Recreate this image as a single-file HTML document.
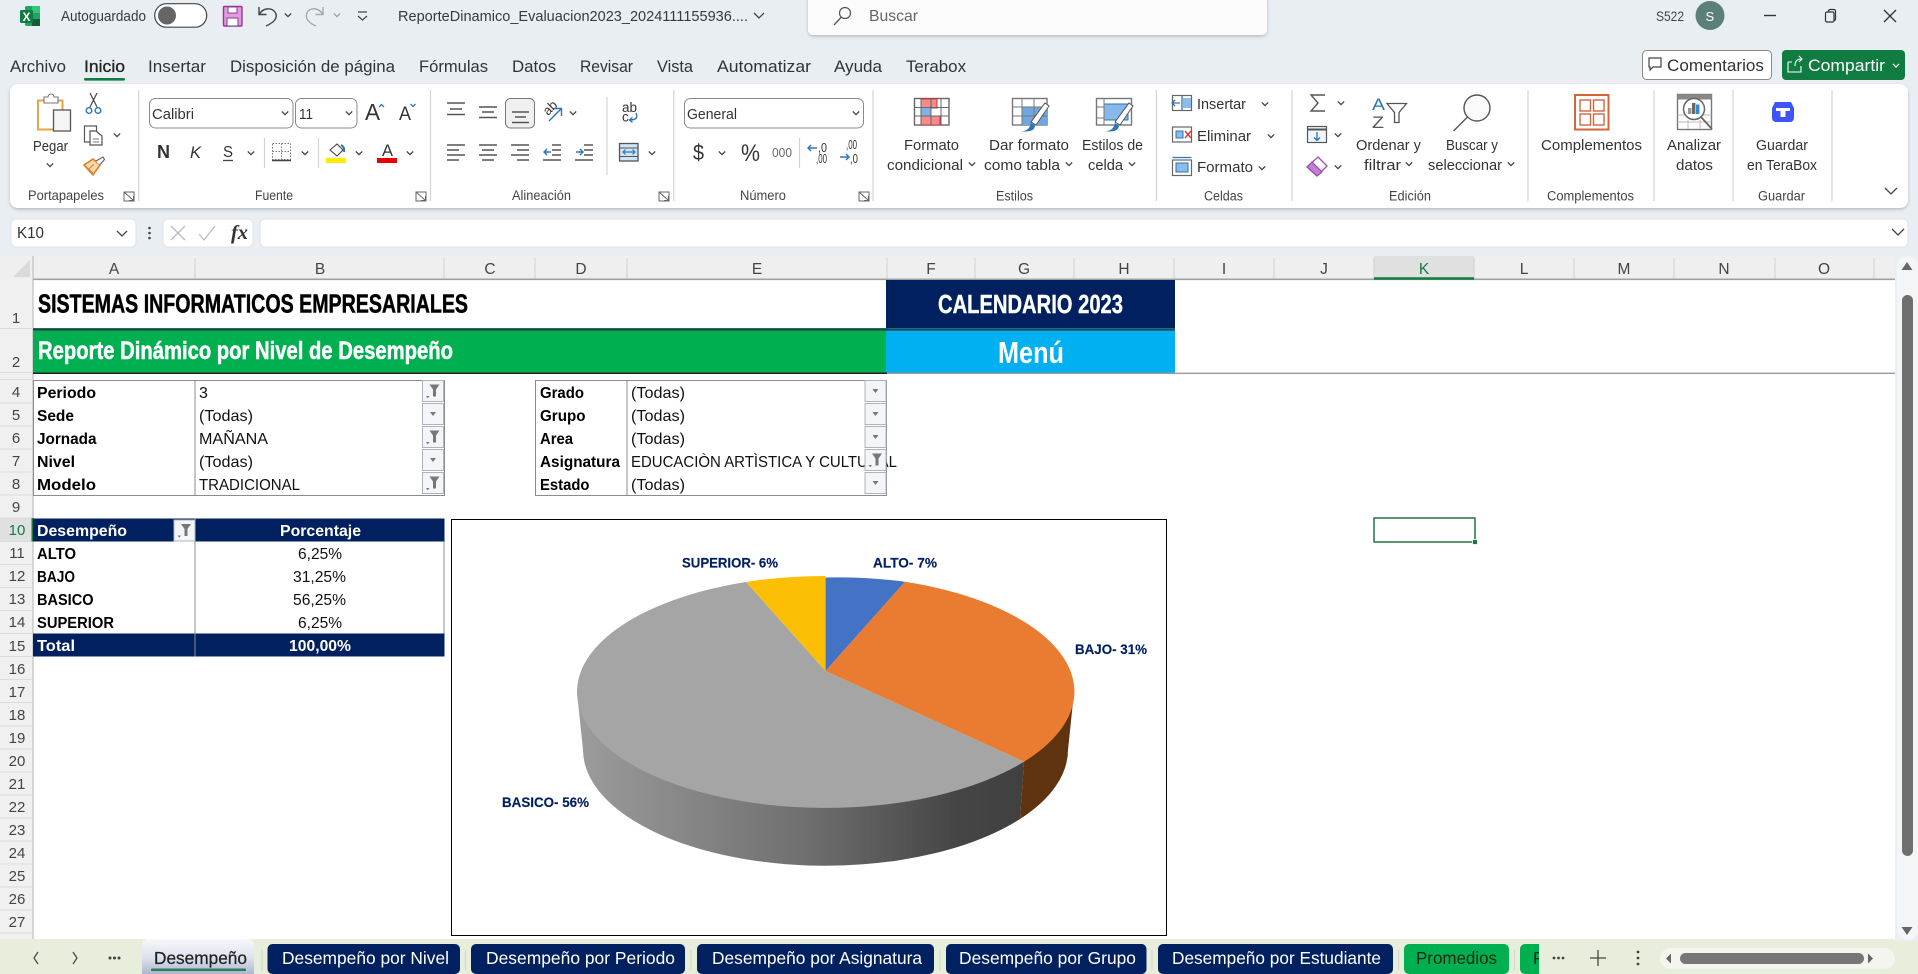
<!DOCTYPE html>
<html lang="es"><head><meta charset="utf-8"><title>Excel</title>
<style>
html,body{margin:0;padding:0;width:1918px;height:974px;overflow:hidden;background:#e9eef2}
svg{display:block}
text{font-family:"Liberation Sans",sans-serif;font-size:15px;fill:#333}
.r{fill:#3a3a3a;font-size:14.5px}
.g{fill:#444;font-size:13.5px}
.m{fill:#333;font-size:16.5px}
.h{fill:#444;font-size:15.5px;text-anchor:middle}
.n{fill:#444;font-size:15px;text-anchor:middle}
.b{font-weight:bold;fill:#000;font-size:16px}
.v{fill:#111;font-size:16px}
.w{font-weight:bold;fill:#fff;font-size:16px}
.l{font-weight:bold;fill:#002060;font-size:14px;stroke:#002060;stroke-width:.15}
.tb{fill:#fff;font-size:17.5px}
.ln{stroke:#555;stroke-width:1.5;fill:none}
.sep{stroke:#d4d4d4;stroke-width:1.2}
.f{font-size:15px}
</style></head><body>
<svg width="1918" height="974" viewBox="0 0 1918 974" xmlns="http://www.w3.org/2000/svg">
<defs>
<path id="c" d="M-3.2,-1.6 L0,1.6 L3.2,-1.6" fill="none" stroke="#444" stroke-width="1.3"/>
<g id="lau"><path d="M0,0 H10 V9 H0 Z M0,0 L9,8 M5,8.5 H9.5 V4" fill="none" stroke="#666" stroke-width="1"/></g>
<g id="fd"><rect x="0" y="0" width="21" height="21" fill="#f3f5f8" stroke="#b0b4ba"/><path d="M7.5,8.5 h6 l-3,4 z" fill="#777"/></g>
<g id="ff"><rect x="0" y="0" width="21" height="21" fill="#f3f5f8" stroke="#b0b4ba"/><path d="M7,4 h10 l-3.5,5 v7 h-3 v-7 z" fill="#777"/><path d="M3.5,15.5 h3.5 l-1.75,2.2 z" fill="#777"/></g>
<clipPath id="tc"><rect x="1515" y="940" width="24" height="34"/></clipPath>
<linearGradient id="sg" x1="577" x2="1024" y1="0" y2="0" gradientUnits="userSpaceOnUse"><stop offset="0" stop-color="#9c9c9c"/><stop offset=".5" stop-color="#707070"/><stop offset=".85" stop-color="#454545"/><stop offset="1" stop-color="#404040"/></linearGradient>
<linearGradient id="at" x1="0" x2="0" y1="0" y2="1"><stop offset="0" stop-color="#f7f8fb"/><stop offset=".55" stop-color="#dde1ec"/><stop offset="1" stop-color="#aeb7d0"/></linearGradient>
<filter id="sh" x="-2%" y="-10%" width="104%" height="125%"><feDropShadow dx="0" dy="1.5" stdDeviation="1.5" flood-color="#000" flood-opacity=".22"/></filter>
</defs>

<rect width="1918" height="974" fill="#e9eef2"/>

<!-- title bar -->
<rect x="25" y="6" width="15" height="20" rx="1.5" fill="#21a366"/><rect x="32" y="6" width="8" height="7" fill="#33c481"/><rect x="32" y="19" width="8" height="7" fill="#185c37"/>
<rect x="20" y="10" width="13" height="13" rx="1.5" fill="#107c41"/><text x="22.5" y="21" style="font-size:12px;font-weight:bold;fill:#fff">X</text>
<text class="r" x="61" y="21" textLength="85" lengthAdjust="spacingAndGlyphs">Autoguardado</text>
<rect x="154.7" y="3.7" width="52" height="23.5" rx="11.7" fill="#fff" stroke="#444" stroke-width="1.2"/><circle cx="167" cy="15.5" r="9" fill="#666"/>
<rect x="223.5" y="6.5" width="18.5" height="19.5" rx="1" fill="#e39ade" stroke="#8e3a96" stroke-width="1.4"/><rect x="228" y="7" width="9" height="6" fill="#fff" stroke="#8e3a96"/><rect x="227" y="18" width="11" height="8" fill="#fff" stroke="#8e3a96"/>
<path d="M259,7 v7.5 h7.5 M259.5,14 C263,8 271,7 275,12 C279,18 273,23 266,26" fill="none" stroke="#444" stroke-width="1.4"/>
<use href="#c" x="288" y="15"/>
<path d="M323,7 v7.5 h-7.5 M322.5,14 C319,8 311,7 307.5,12 C304,18 309,23 316,26" fill="none" stroke="#a8a8a8" stroke-width="1.4"/>
<use href="#c" x="337" y="15" style="opacity:.45"/>
<path d="M358,12 h9 M358,16 l4.5,4 l4.5,-4" fill="none" stroke="#444" stroke-width="1.2"/>
<text class="r" x="398" y="21" textLength="350" lengthAdjust="spacingAndGlyphs" style="font-size:15px">ReporteDinamico_Evaluacion2023_2024111155936....</text>
<path d="M754,13 l5,5 l5,-5" fill="none" stroke="#444" stroke-width="1.3"/>
<rect x="808" y="-6" width="459" height="41" rx="5" fill="#fcfcfc" filter="url(#sh)"/>
<circle cx="845" cy="13" r="5.5" fill="none" stroke="#555" stroke-width="1.2"/><path d="M841,17.5 L834,25" stroke="#555" stroke-width="1.3"/>
<text x="869" y="21" style="font-size:16px;fill:#666" textLength="49" lengthAdjust="spacingAndGlyphs">Buscar</text>
<text class="g" x="1656" y="21" textLength="28" lengthAdjust="spacingAndGlyphs">S522</text>
<ellipse cx="1710" cy="15.5" rx="14.5" ry="14.5" fill="#5b8077"/><text x="1705.5" y="21" style="font-size:13px;fill:#fff">S</text>
<path d="M1764,15.5 h12" stroke="#333" stroke-width="1.4"/>
<rect x="1825.5" y="12" width="8.5" height="10" rx="1.5" fill="none" stroke="#333" stroke-width="1.2"/><path d="M1828.5,12 v-1 a1.5,1.5 0 0 1 1.5,-1.5 h4 a1.5,1.5 0 0 1 1.5,1.5 v8 a1.5,1.5 0 0 1 -1.5,1.5" fill="none" stroke="#333" stroke-width="1.2"/>
<path d="M1884,10 l12,12 M1896,10 l-12,12" stroke="#333" stroke-width="1.3"/>

<!-- menu -->
<g>
<text class="m" x="10" y="72" textLength="56" lengthAdjust="spacingAndGlyphs">Archivo</text>
<text class="m" x="84" y="72" textLength="41" lengthAdjust="spacingAndGlyphs" style="fill:#222;stroke:#222;stroke-width:.3">Inicio</text>
<text class="m" x="148" y="72" textLength="58" lengthAdjust="spacingAndGlyphs">Insertar</text>
<text class="m" x="230" y="72" textLength="165" lengthAdjust="spacingAndGlyphs">Disposición de página</text>
<text class="m" x="419" y="72" textLength="69" lengthAdjust="spacingAndGlyphs">Fórmulas</text>
<text class="m" x="512" y="72" textLength="44" lengthAdjust="spacingAndGlyphs">Datos</text>
<text class="m" x="580" y="72" textLength="53" lengthAdjust="spacingAndGlyphs">Revisar</text>
<text class="m" x="657" y="72" textLength="36" lengthAdjust="spacingAndGlyphs">Vista</text>
<text class="m" x="717" y="72" textLength="94" lengthAdjust="spacingAndGlyphs">Automatizar</text>
<text class="m" x="834" y="72" textLength="48" lengthAdjust="spacingAndGlyphs">Ayuda</text>
<text class="m" x="906" y="72" textLength="60" lengthAdjust="spacingAndGlyphs">Terabox</text>
</g>
<rect x="84" y="78" width="41" height="2.6" rx="1.2" fill="#107c41"/>
<rect x="1642.5" y="50.5" width="129" height="29" rx="4" fill="#fff" stroke="#8a8a8a"/>
<path d="M1649,58 h12 v9 h-8 l-3,3 v-3 h-1 z" fill="none" stroke="#444" stroke-width="1.2"/>
<text class="m" x="1667" y="71" textLength="97" lengthAdjust="spacingAndGlyphs">Comentarios</text>
<rect x="1782" y="50" width="123" height="30" rx="4" fill="#107c41"/>
<path d="M1788,62 h4 M1788,62 v10 h13 v-6 M1795,66 c0,-5 2,-7 6,-7 M1799,56 l3,3 l-3,3" fill="none" stroke="#fff" stroke-width="1.1"/>
<text class="m" x="1808" y="71" textLength="77" lengthAdjust="spacingAndGlyphs" style="fill:#fff">Compartir</text>
<path d="M1893,64 l3,3 l3,-3" fill="none" stroke="#fff" stroke-width="1.3"/>

<!-- ribbon -->
<rect x="10" y="84" width="1898" height="124" rx="8" fill="#fff" filter="url(#sh)"/>
<path class="sep" d="M138.7,90 V201 M430.5,90 V201 M673.7,90 V201 M873,90 V201 M1156.5,90 V201 M1292,90 V201 M1528,90 V201 M1654,90 V201 M1733,90 V201 M1832,90 V201 M264.5,138 V168 M318.5,138 V168 M607,97 V175 M799.5,138 V168"/>

<!-- portapapeles -->
<rect x="38" y="100.5" width="24.5" height="29" fill="#fff" stroke="#e8a24a" stroke-width="2"/>
<path d="M44,100 v-3 h4 a3,3 0 0 1 6,0 h4 v6 h-14 z" fill="#fff" stroke="#777" stroke-width="1.1"/>
<rect x="53.5" y="110" width="17" height="21" fill="#f5f5f5" stroke="#555" stroke-width="1.3"/>
<text class="f" x="33" y="151" textLength="35" lengthAdjust="spacingAndGlyphs">Pegar</text>
<use href="#c" x="50" y="165"/>
<path d="M90,93 L97,107 M97,93 L90,107" stroke="#444" stroke-width="1.2"/><circle cx="89" cy="110.5" r="2.8" fill="none" stroke="#2e75b6" stroke-width="1.4"/><circle cx="98" cy="110.5" r="2.8" fill="none" stroke="#2e75b6" stroke-width="1.4"/>
<rect x="84.5" y="126" width="12" height="16" fill="#fff" stroke="#555" stroke-width="1.2"/><path d="M90,131 h6 l6,5 v9 h-12 z" fill="#fff" stroke="#555" stroke-width="1.2"/><path d="M93,139 h6 M93,142 h6" stroke="#777"/>
<use href="#c" x="117" y="135"/>
<path d="M84,165 l9,-6 l7,6 l-7,10 z" fill="#fbd9ac" stroke="#d9822b" stroke-width="1.6"/><path d="M88,170 l6,-6 M84,165 l9,8" stroke="#d9822b" fill="none"/><path d="M96,161 l7,-4 l1.5,2.5 l-5,5.5" fill="#fff" stroke="#666" stroke-width="1.2"/>
<text class="g" x="28" y="200" textLength="76" lengthAdjust="spacingAndGlyphs">Portapapeles</text>
<use href="#lau" x="124" y="192"/>

<!-- fuente -->
<rect x="149.5" y="98.5" width="143.5" height="29.5" rx="6" fill="#fff" stroke="#8a8a8a"/>
<text class="f" x="152" y="119" textLength="42" lengthAdjust="spacingAndGlyphs">Calibri</text><use href="#c" x="285" y="113"/>
<rect x="295.5" y="98.5" width="61.5" height="29.5" rx="6" fill="#fff" stroke="#8a8a8a"/>
<text class="f" x="299" y="119" textLength="14" lengthAdjust="spacingAndGlyphs">11</text><use href="#c" x="349" y="113"/>
<text x="365" y="120" style="font-size:23px" textLength="15" lengthAdjust="spacingAndGlyphs">A</text><path d="M379,107 l2.5,-2.5 l2.5,2.5" fill="none" stroke="#2e75b6" stroke-width="1.3"/>
<text x="399" y="120" style="font-size:19px" textLength="12" lengthAdjust="spacingAndGlyphs">A</text><path d="M410.5,104 l2.5,2.5 l2.5,-2.5" fill="none" stroke="#2e75b6" stroke-width="1.3"/>
<text x="157" y="158" style="font-size:18px;font-weight:bold" textLength="13" lengthAdjust="spacingAndGlyphs">N</text>
<text x="190" y="158" style="font-size:17px;font-style:italic" textLength="11" lengthAdjust="spacingAndGlyphs">K</text>
<text x="223" y="157" style="font-size:16px" textLength="10" lengthAdjust="spacingAndGlyphs">S</text><path d="M223,160.5 h10" stroke="#444" stroke-width="1.3"/>
<use href="#c" x="251" y="153"/>
<path d="M272.5,143.5 h18 v16 h-18 z M281.5,143.5 v16 M272.5,151.5 h18" fill="none" stroke="#777" stroke-dasharray="1.5 1.5"/><path d="M272,160.5 h19" stroke="#444" stroke-width="1.6"/>
<use href="#c" x="305" y="153"/>
<path d="M330,150 l7,-6 l6,6 l-6,6 z" fill="#fff" stroke="#444" stroke-width="1.1"/><path d="M341,145 q4,2 3,7" fill="none" stroke="#2e75b6" stroke-width="2"/>
<rect x="326" y="158" width="20" height="5" fill="#ffec00"/><use href="#c" x="359" y="153"/>
<text x="382" y="156" style="font-size:17px" textLength="11" lengthAdjust="spacingAndGlyphs">A</text><rect x="377" y="158" width="20" height="5" fill="#e80000"/><use href="#c" x="410" y="153"/>
<text class="g" x="255" y="200" textLength="38" lengthAdjust="spacingAndGlyphs">Fuente</text>
<use href="#lau" x="416" y="192"/>

<!-- alineacion -->
<path class="ln" d="M447,103 h18 M450,109 h12 M447,114.5 h18"/>
<path class="ln" d="M479,107 h18 M482,112 h12 M479,117.5 h18"/>
<rect x="505.5" y="98.5" width="29" height="29.5" rx="5" fill="#f0f0f0" stroke="#777"/>
<path class="ln" d="M512,112 h17 M515,117 h11 M512,122.5 h17"/>
<text x="0" y="0" transform="translate(548,116) rotate(-45)" style="font-size:13px">ab</text>
<path d="M549,121 L561,109 M554,108.5 h7.5 v7.5" fill="none" stroke="#2e75b6" stroke-width="1.4"/>
<use href="#c" x="573" y="113"/>
<path class="ln" d="M447,145 h18 M447,150 h12 M447,155 h18 M447,160 h12"/>
<path class="ln" d="M479,145 h18 M482,150 h12 M479,155 h18 M482,160 h12"/>
<path class="ln" d="M511,145 h18 M517,150 h12 M511,155 h18 M517,160 h12"/>
<path class="ln" d="M552,145 h9 M552,150 h9 M552,155 h9 M543,160 h18"/><path d="M551,152 h-7 M547,149 l-3,3 l3,3" fill="none" stroke="#2e75b6" stroke-width="1.4"/>
<path class="ln" d="M584,145 h9 M584,150 h9 M584,155 h9 M575,160 h18"/><path d="M576,152 h7 M580,149 l3,3 l-3,3" fill="none" stroke="#2e75b6" stroke-width="1.4"/>
<text x="622" y="112" style="font-size:13.5px" textLength="15" lengthAdjust="spacingAndGlyphs">ab</text><text x="622" y="121.5" style="font-size:13.5px">c</text>
<path d="M636,113 q3,7 -6,7 M632.5,117.5 l-3,2.5 l3,2.5" fill="none" stroke="#2e75b6" stroke-width="1.4"/>
<rect x="619.5" y="143.5" width="18.5" height="17.5" fill="#cfe4f7" stroke="#555" stroke-width="1.3"/><path d="M619.5,148 h18.5 M619.5,156.5 h18.5" stroke="#555"/><path d="M623,152 h12 M625.5,149.5 l-2.5,2.5 l2.5,2.5 M632.5,149.5 l2.5,2.5 l-2.5,2.5" fill="none" stroke="#2e75b6" stroke-width="1.2"/>
<use href="#c" x="652" y="153"/>
<text class="g" x="512" y="200" textLength="59" lengthAdjust="spacingAndGlyphs">Alineación</text>
<use href="#lau" x="659" y="192"/>

<!-- numero -->
<rect x="684.5" y="98.5" width="179" height="29.5" rx="6" fill="#fff" stroke="#8a8a8a"/>
<text class="f" x="687" y="119" textLength="50" lengthAdjust="spacingAndGlyphs">General</text><use href="#c" x="856" y="113"/>
<text x="693" y="160" style="font-size:22px" textLength="11" lengthAdjust="spacingAndGlyphs">$</text><use href="#c" x="722" y="153"/>
<text x="741" y="161" style="font-size:24px" textLength="19" lengthAdjust="spacingAndGlyphs">%</text>
<text x="772" y="157" style="font-size:13px;fill:#666" textLength="20" lengthAdjust="spacingAndGlyphs">000</text>
<text x="818" y="152" style="font-size:12.5px" textLength="9" lengthAdjust="spacingAndGlyphs">,0</text><text x="816" y="163" style="font-size:12.5px" textLength="11" lengthAdjust="spacingAndGlyphs">,00</text>
<path d="M817,148 h-9 M811,145 l-3,3 l3,3" fill="none" stroke="#2e75b6" stroke-width="1.4"/>
<text x="846" y="149" style="font-size:12.5px" textLength="11" lengthAdjust="spacingAndGlyphs">,00</text><text x="850" y="163" style="font-size:12.5px" textLength="8" lengthAdjust="spacingAndGlyphs">,0</text>
<path d="M840,157 h9 M846,154 l3,3 l-3,3" fill="none" stroke="#2e75b6" stroke-width="1.4"/>
<text class="g" x="740" y="200" textLength="46" lengthAdjust="spacingAndGlyphs">Número</text>
<use href="#lau" x="859" y="192"/>

<!-- estilos -->
<rect x="914.5" y="98.5" width="34.5" height="26.5" fill="#fff" stroke="#666" stroke-width="1.4"/>
<rect x="921" y="99" width="16" height="9" fill="#f68b8f" stroke="#c33" /><rect x="921" y="116" width="19" height="9" fill="#f68b8f" stroke="#c33"/><rect x="921" y="108" width="10" height="8" fill="#7fb2e5"/>
<path d="M921,98.5 V125 M931,98.5 V125 M941,98.5 V125 M914.5,107.5 H949 M914.5,116 H949" stroke="#666" fill="none"/>
<rect x="1012.5" y="98.5" width="34.5" height="26.5" fill="#fff" stroke="#777" stroke-width="1.4"/>
<rect x="1022" y="107" width="25" height="18" fill="#6fa8e0"/>
<path d="M1022,98.5 V125 M1034,98.5 V125 M1012.5,107 H1047 M1012.5,116 H1047" stroke="#777" fill="none"/>
<path d="M1020,131 q9,1 11,-8 l4,3 q-1,7 -15,5 z" fill="#2e75b6"/>
<path d="M1049,106 L1036,125 l-5,-3 L1045,103 z" fill="#fff" stroke="#555"/>
<rect x="1096.5" y="98.5" width="35" height="26.5" fill="#fff" stroke="#777" stroke-width="1.4"/>
<rect x="1104" y="104" width="24" height="16" fill="#86b8ea" stroke="#2e75b6"/>
<path d="M1104,98.5 V125 M1096.5,107 H1104 M1096.5,118 H1104" stroke="#777" fill="none"/>
<path d="M1104,131 q9,1 11,-8 l4,3 q-1,7 -15,5 z" fill="#2e75b6"/>
<path d="M1133,106 L1120,125 l-5,-3 L1129,103 z" fill="#fff" stroke="#555"/>
<text class="f" x="904" y="150" textLength="55" lengthAdjust="spacingAndGlyphs">Formato</text>
<text class="f" x="887" y="170" textLength="76" lengthAdjust="spacingAndGlyphs">condicional</text><use href="#c" x="972" y="164"/>
<text class="f" x="989" y="150" textLength="80" lengthAdjust="spacingAndGlyphs">Dar formato</text>
<text class="f" x="984" y="170" textLength="76" lengthAdjust="spacingAndGlyphs">como tabla</text><use href="#c" x="1069" y="164"/>
<text class="f" x="1082" y="150" textLength="61" lengthAdjust="spacingAndGlyphs">Estilos de</text>
<text class="f" x="1088" y="170" textLength="35" lengthAdjust="spacingAndGlyphs">celda</text><use href="#c" x="1132" y="164"/>
<text class="g" x="996" y="200.5" textLength="37" lengthAdjust="spacingAndGlyphs">Estilos</text>

<!-- celdas -->
<rect x="1172.5" y="95.5" width="19" height="15" fill="#fff" stroke="#666" stroke-width="1.2"/><rect x="1183" y="98" width="8" height="10" fill="#8cbcea"/><path d="M1172,103 h8 M1175,100 l-3,3 l3,3 M1182,95.5 v15" fill="none" stroke="#2e75b6" stroke-width="1.3"/>
<text class="f" x="1197" y="109" textLength="49" lengthAdjust="spacingAndGlyphs">Insertar</text><use href="#c" x="1265" y="104"/>
<rect x="1172.5" y="127" width="19" height="15" fill="#fff" stroke="#666" stroke-width="1.2"/><rect x="1176" y="131" width="7" height="7" fill="#8cbcea" stroke="#2e75b6"/><path d="M1185,131 l6,7 M1191,131 l-6,7" stroke="#e33" stroke-width="1.4"/>
<text class="f" x="1197" y="141" textLength="54" lengthAdjust="spacingAndGlyphs">Eliminar</text><use href="#c" x="1271" y="136"/>
<rect x="1172.5" y="160" width="19" height="15.5" fill="#fff" stroke="#666" stroke-width="1.2"/><rect x="1176" y="163" width="12" height="9" fill="#8cbcea" stroke="#2e75b6"/><path d="M1172.5,157.5 h19" stroke="#2e75b6" stroke-width="1.2"/>
<text class="f" x="1197" y="172" textLength="56" lengthAdjust="spacingAndGlyphs">Formato</text><use href="#c" x="1262" y="168"/>
<text class="g" x="1204" y="200.5" textLength="39" lengthAdjust="spacingAndGlyphs">Celdas</text>

<!-- edicion -->
<path d="M1325,95 h-14 l7,8 l-7,8 h14" fill="none" stroke="#555" stroke-width="1.4"/><use href="#c" x="1341" y="103"/>
<rect x="1307.5" y="126.5" width="19" height="16" fill="#eef5fc" stroke="#555" stroke-width="1.2"/><path d="M1307.5,129.5 h19" stroke="#555" stroke-width="2"/><path d="M1317,132 v8 M1314,137.5 l3,3 l3,-3" fill="none" stroke="#2e75b6" stroke-width="1.3"/><use href="#c" x="1338" y="135"/>
<path d="M1307,167 l11,-10 l9,9 l-10,10 z" fill="#fff" stroke="#9a4eae" stroke-width="1.3"/><path d="M1307,167 l5,-5 l10,10 l-5,4 z" fill="#c080d0" stroke="#9a4eae" stroke-width="1.2"/><use href="#c" x="1338" y="167"/>
<text x="1372" y="110" style="font-size:17px;fill:#2e75b6" textLength="13" lengthAdjust="spacingAndGlyphs">A</text>
<text x="1372" y="128" style="font-size:17px;fill:#555" textLength="12" lengthAdjust="spacingAndGlyphs">Z</text>
<path d="M1387,103.5 h19.5 l-7.5,9 v10 h-4.5 v-10 z" fill="#fff" stroke="#555" stroke-width="1.3"/>
<text class="f" x="1356" y="150" textLength="65" lengthAdjust="spacingAndGlyphs">Ordenar y</text>
<text class="f" x="1364" y="170" textLength="37" lengthAdjust="spacingAndGlyphs">filtrar</text><use href="#c" x="1409" y="164"/>
<circle cx="1477" cy="108" r="13" fill="#fafafa" stroke="#555" stroke-width="1.4"/><path d="M1467.5,117 L1453.5,131" stroke="#555" stroke-width="1.4"/>
<text class="f" x="1446" y="150" textLength="52" lengthAdjust="spacingAndGlyphs">Buscar y</text>
<text class="f" x="1428" y="170" textLength="74" lengthAdjust="spacingAndGlyphs">seleccionar</text><use href="#c" x="1511" y="164"/>
<text class="g" x="1389" y="200.5" textLength="42" lengthAdjust="spacingAndGlyphs">Edición</text>

<!-- complementos -->
<rect x="1575" y="95" width="33.5" height="34.5" fill="#fff" stroke="#d0663d" stroke-width="2"/>
<rect x="1580" y="100" width="10.5" height="11" fill="none" stroke="#d0663d" stroke-width="1.4"/><rect x="1593.5" y="100" width="10.5" height="11" fill="none" stroke="#d0663d" stroke-width="1.4"/><rect x="1580" y="114" width="10.5" height="11" fill="none" stroke="#d0663d" stroke-width="1.4"/><rect x="1593.5" y="114" width="10.5" height="11" fill="none" stroke="#d0663d" stroke-width="1.4"/>
<text class="f" x="1541" y="150" textLength="101" lengthAdjust="spacingAndGlyphs">Complementos</text>
<text class="g" x="1547" y="200.5" textLength="87" lengthAdjust="spacingAndGlyphs">Complementos</text>

<!-- analizar -->
<rect x="1677.5" y="94.5" width="34" height="35" fill="#fff" stroke="#777" stroke-width="1.4"/><rect x="1677.5" y="94.5" width="34" height="5" fill="#888"/>
<path d="M1677.5,115 h34 M1677.5,122 h34 M1688,120 v9 M1700,120 v9" stroke="#bbb"/>
<circle cx="1694" cy="109" r="10.5" fill="#fff" stroke="#666" stroke-width="1.5"/>
<rect x="1688" y="108" width="3.4" height="6" fill="#999"/><rect x="1692" y="103" width="3.4" height="11" fill="#666"/><rect x="1696" y="104.5" width="3.4" height="9.5" fill="#2e8ad6"/>
<path d="M1701,117 L1712,129" stroke="#666" stroke-width="1.8"/>
<text class="f" x="1667" y="150" textLength="54" lengthAdjust="spacingAndGlyphs">Analizar</text>
<text class="f" x="1676" y="170" textLength="37" lengthAdjust="spacingAndGlyphs">datos</text>

<!-- terabox -->
<path d="M1775,102 h16 l3,6 v10 a4,4 0 0 1 -4,4 h-14 a4,4 0 0 1 -4,-4 v-10 z" fill="#3d55f5"/><path d="M1776,108 h14 v3 h-4.5 v6 h-5 v-6 h-4.5 z" fill="#fff"/>
<text class="f" x="1756" y="150" textLength="52" lengthAdjust="spacingAndGlyphs">Guardar</text>
<text class="f" x="1747" y="170" textLength="70" lengthAdjust="spacingAndGlyphs">en TeraBox</text>
<text class="g" x="1758" y="200.5" textLength="47" lengthAdjust="spacingAndGlyphs">Guardar</text>
<path d="M1885,188 l6,6 l6,-6" fill="none" stroke="#444" stroke-width="1.3"/>

<!-- formula bar -->
<rect x="11" y="219" width="125" height="28" rx="5" fill="#fff" stroke="#dfe3e6"/>
<text x="17" y="238" style="font-size:15.5px" textLength="27" lengthAdjust="spacingAndGlyphs">K10</text>
<path d="M117,231 l5,5 l5,-5" fill="none" stroke="#444" stroke-width="1.3"/>
<circle cx="149.5" cy="228" r="1.3" fill="#444"/><circle cx="149.5" cy="233" r="1.3" fill="#444"/><circle cx="149.5" cy="238" r="1.3" fill="#444"/>
<rect x="163" y="219" width="90" height="28" rx="5" fill="#fff" stroke="#dfe3e6"/>
<path d="M171,226 l14,14 M185,226 l-14,14" stroke="#bcbcbc" stroke-width="1.3"/><path d="M199,234 l5,6 l11,-14" fill="none" stroke="#bcbcbc" stroke-width="1.3"/>
<text x="231" y="239" style="font-family:'Liberation Serif',serif;font-style:italic;font-weight:bold;font-size:20px;fill:#333" textLength="17" lengthAdjust="spacingAndGlyphs">fx</text>
<rect x="260" y="219" width="1648" height="28" rx="5" fill="#fff" stroke="#dfe3e6"/>
<path d="M1892,229 l6,6 l6,-6" fill="none" stroke="#444" stroke-width="1.3"/>

<!-- sheet -->
<rect x="0" y="256" width="1895" height="23" fill="#efefef"/>
<rect x="0" y="279" width="33" height="660" fill="#f0f0f0"/>
<rect x="33" y="280" width="1862" height="659" fill="#fff"/>
<path d="M13,277 L30,277 L30,260 Z" fill="#dadada"/>
<rect x="1374" y="256" width="100" height="23" fill="#e0e0e0"/>
<path d="M195,258 V279 M444,258 V279 M535,258 V279 M627,258 V279 M887,258 V279 M975,258 V279 M1074,258 V279 M1174,258 V279 M1274,258 V279 M1374,258 V279 M1474,258 V279 M1574,258 V279 M1674,258 V279 M1775,258 V279 M1874,258 V279" stroke="#d2d2d2"/>
<path d="M33,279.3 H1895" stroke="#a0a0a0" stroke-width="1.6"/>
<path d="M1374,278.5 H1474" stroke="#107c41" stroke-width="2.6"/>
<path d="M33,256 V939" stroke="#b4b4b4"/>
<g>
<text class="h" x="114" y="274">A</text><text class="h" x="320" y="274">B</text><text class="h" x="490" y="274">C</text><text class="h" x="581" y="274">D</text><text class="h" x="757" y="274">E</text><text class="h" x="931" y="274">F</text><text class="h" x="1024" y="274">G</text><text class="h" x="1124" y="274">H</text><text class="h" x="1224" y="274">I</text><text class="h" x="1324" y="274">J</text><text class="h" x="1424" y="274" style="fill:#107c41">K</text><text class="h" x="1524" y="274">L</text><text class="h" x="1624" y="274">M</text><text class="h" x="1724" y="274">N</text><text class="h" x="1824" y="274">O</text>
</g>
<rect x="0" y="518.5" width="33" height="23" fill="#e0e0e0"/>
<path d="M0,328.5 H33 M0,372.5 H33 M0,379.5 H33 M0,403 H33 M0,426 H33 M0,449 H33 M0,472 H33 M0,495 H33 M0,518 H33 M0,541.5 H33 M0,564.5 H33 M0,587.5 H33 M0,610.5 H33 M0,633.5 H33 M0,656.5 H33 M0,679.5 H33 M0,702.5 H33 M0,726 H33 M0,749 H33 M0,772 H33 M0,795 H33 M0,818 H33 M0,841 H33 M0,864 H33 M0,887 H33 M0,910 H33 M0,933 H33" stroke="#dcdcdc"/>
<path d="M32.5,518 V541.5" stroke="#107c41" stroke-width="2"/>
<g>
<text class="n" x="16" y="323">1</text><text class="n" x="16" y="367">2</text>
<text class="n" x="16" y="397">4</text><text class="n" x="16" y="420">5</text><text class="n" x="16" y="443">6</text><text class="n" x="16" y="466">7</text><text class="n" x="16" y="489">8</text><text class="n" x="16" y="512">9</text>
<text class="n" x="17" y="535" style="fill:#107c41">10</text><text class="n" x="17" y="558">11</text><text class="n" x="17" y="581">12</text><text class="n" x="17" y="604">13</text><text class="n" x="17" y="627">14</text><text class="n" x="17" y="651">15</text><text class="n" x="17" y="674">16</text><text class="n" x="17" y="697">17</text><text class="n" x="17" y="720">18</text><text class="n" x="17" y="743">19</text><text class="n" x="17" y="766">20</text><text class="n" x="17" y="789">21</text><text class="n" x="17" y="812">22</text><text class="n" x="17" y="835">23</text><text class="n" x="17" y="858">24</text><text class="n" x="17" y="881">25</text><text class="n" x="17" y="904">26</text><text class="n" x="17" y="927">27</text>
</g>

<!-- header bands -->
<text x="38" y="312.5" style="font-size:26px;font-weight:bold;fill:#000;stroke:#000;stroke-width:.5" textLength="430" lengthAdjust="spacingAndGlyphs">SISTEMAS INFORMATICOS EMPRESARIALES</text>
<rect x="33" y="331" width="854" height="42" fill="#00b050"/>
<path d="M33,329.5 H887" stroke="#0f4f40" stroke-width="2.8"/>
<text x="38" y="359" style="font-size:25px;font-weight:bold;fill:#fff;stroke:#fff;stroke-width:.5" textLength="415" lengthAdjust="spacingAndGlyphs">Reporte Dinámico por Nivel de Desempeño</text>
<rect x="886" y="280" width="289" height="48" fill="#002060"/>
<rect x="886" y="331" width="289" height="42" fill="#00b0f0"/>
<path d="M886,329.5 H1175" stroke="#0f4f6a" stroke-width="2.8"/>
<text x="938" y="313" style="font-size:26px;font-weight:bold;fill:#fff;stroke:#fff;stroke-width:.4" textLength="185" lengthAdjust="spacingAndGlyphs">CALENDARIO 2023</text>
<text x="998" y="363" style="font-size:31px;font-weight:bold;fill:#fff" textLength="66" lengthAdjust="spacingAndGlyphs">Menú</text>
<path d="M33,373.3 H887" stroke="#222" stroke-width="1.5"/><path d="M887,373.3 H1895" stroke="#9a9a9a" stroke-width="1.3"/>

<!-- filter left -->
<rect x="33.5" y="380.5" width="411" height="115" fill="#fff" stroke="#8c8c8c"/><path d="M195,380.5 V495" stroke="#8c8c8c"/>
<text class="b" x="37" y="398" textLength="59" lengthAdjust="spacingAndGlyphs">Periodo</text><text class="v" x="199" y="398">3</text>
<text class="b" x="37" y="421" textLength="37" lengthAdjust="spacingAndGlyphs">Sede</text><text class="v" x="199" y="421" textLength="54" lengthAdjust="spacingAndGlyphs">(Todas)</text>
<text class="b" x="37" y="444" textLength="59.5" lengthAdjust="spacingAndGlyphs">Jornada</text><text class="v" x="199" y="444" textLength="69" lengthAdjust="spacingAndGlyphs">MAÑANA</text>
<text class="b" x="37" y="467" textLength="38" lengthAdjust="spacingAndGlyphs">Nivel</text><text class="v" x="199" y="467" textLength="54" lengthAdjust="spacingAndGlyphs">(Todas)</text>
<text class="b" x="37" y="490" textLength="59" lengthAdjust="spacingAndGlyphs">Modelo</text><text class="v" x="199" y="490" textLength="101" lengthAdjust="spacingAndGlyphs">TRADICIONAL</text>
<use href="#ff" x="422.5" y="380.5"/><use href="#fd" x="422.5" y="403.5"/><use href="#ff" x="422.5" y="426.5"/><use href="#fd" x="422.5" y="449.5"/><use href="#ff" x="422.5" y="472.5"/>

<!-- filter right -->
<rect x="535.5" y="380.5" width="351" height="115" fill="#fff" stroke="#8c8c8c"/><path d="M627,380.5 V495" stroke="#8c8c8c"/>
<text class="b" x="540" y="398" textLength="44" lengthAdjust="spacingAndGlyphs">Grado</text><text class="v" x="631" y="398" textLength="54" lengthAdjust="spacingAndGlyphs">(Todas)</text>
<text class="b" x="540" y="421" textLength="45.5" lengthAdjust="spacingAndGlyphs">Grupo</text><text class="v" x="631" y="421" textLength="54" lengthAdjust="spacingAndGlyphs">(Todas)</text>
<text class="b" x="540" y="444" textLength="33" lengthAdjust="spacingAndGlyphs">Area</text><text class="v" x="631" y="444" textLength="54" lengthAdjust="spacingAndGlyphs">(Todas)</text>
<text class="b" x="540" y="467" textLength="80" lengthAdjust="spacingAndGlyphs">Asignatura</text><text class="v" x="631" y="467" textLength="266" lengthAdjust="spacingAndGlyphs">EDUCACIÒN ARTÌSTICA Y CULTURAL</text>
<text class="b" x="540" y="490" textLength="49.5" lengthAdjust="spacingAndGlyphs">Estado</text><text class="v" x="631" y="490" textLength="54" lengthAdjust="spacingAndGlyphs">(Todas)</text>
<use href="#fd" x="865" y="380.5"/><use href="#fd" x="865" y="403.5"/><use href="#fd" x="865" y="426.5"/><use href="#ff" x="865" y="449.5"/><use href="#fd" x="865" y="472.5"/>

<!-- data table -->
<rect x="33" y="518.5" width="411.5" height="23" fill="#002060"/>
<rect x="33" y="633.5" width="411.5" height="23" fill="#002060"/>
<path d="M195,541.5 V633.5 M444,541.5 V633.5" stroke="#8c8c8c"/><path d="M195,518.5 V656.5" stroke="#8c8c8c"/>
<text class="w" x="37" y="536" textLength="90" lengthAdjust="spacingAndGlyphs">Desempeño</text>
<use href="#ff" x="174" y="520"/>
<text class="w" x="280" y="536" textLength="81" lengthAdjust="spacingAndGlyphs">Porcentaje</text>
<text class="b" x="37" y="559" textLength="39" lengthAdjust="spacingAndGlyphs">ALTO</text><text class="v" x="298" y="559" textLength="44" lengthAdjust="spacingAndGlyphs">6,25%</text>
<text class="b" x="37" y="582" textLength="38" lengthAdjust="spacingAndGlyphs">BAJO</text><text class="v" x="293" y="582" textLength="53" lengthAdjust="spacingAndGlyphs">31,25%</text>
<text class="b" x="37" y="605" textLength="56.5" lengthAdjust="spacingAndGlyphs">BASICO</text><text class="v" x="293" y="605" textLength="53" lengthAdjust="spacingAndGlyphs">56,25%</text>
<text class="b" x="37" y="628" textLength="77" lengthAdjust="spacingAndGlyphs">SUPERIOR</text><text class="v" x="298" y="628" textLength="44" lengthAdjust="spacingAndGlyphs">6,25%</text>
<text class="w" x="37" y="651" textLength="38" lengthAdjust="spacingAndGlyphs">Total</text><text class="w" x="289" y="651" textLength="62" lengthAdjust="spacingAndGlyphs">100,00%</text>

<!-- selection -->
<rect x="1374" y="518" width="101" height="24" fill="none" stroke="#217346" stroke-width="1.5"/><rect x="1472.5" y="539.5" width="5" height="5" fill="#217346" stroke="#fff" stroke-width=".8"/>

<!-- chart -->
<rect x="451.5" y="519.5" width="715" height="416" fill="#fff" stroke="#000" stroke-width="1"/>
<path d="M577,692 L583,750 A242.5,116 0 0 0 1020,819 L1024,762 Z" fill="url(#sg)"/>
<path d="M1020,819 A242.5,116 0 0 0 1068,750 L1074,692 L1024,762 Z" fill="#5f3210"/>
<path d="M825.6,671 L746,582 A248.5,116 0 1 0 1024,761.7 Z" fill="#a5a5a5"/>
<path d="M825.6,671 L825.6,576 A248.5,116 0 0 0 746,582 Z" fill="#fcbf05"/>
<path d="M825.6,671 L825.6,577.5 A248.5,114.5 0 0 1 905,581.7 Z" fill="#4472c4"/>
<path d="M825.6,671 L905,581.7 A248.5,116 0 0 1 1024,761.7 Z" fill="#e97c31"/>
<text class="l" x="682" y="567.5" textLength="96" lengthAdjust="spacingAndGlyphs">SUPERIOR- 6%</text>
<text class="l" x="873" y="567.5" textLength="64" lengthAdjust="spacingAndGlyphs">ALTO- 7%</text>
<text class="l" x="1075" y="654" textLength="72" lengthAdjust="spacingAndGlyphs">BAJO- 31%</text>
<text class="l" x="502" y="807" textLength="87" lengthAdjust="spacingAndGlyphs">BASICO- 56%</text>

<!-- vscroll -->
<rect x="1897" y="256" width="21" height="684" rx="10" fill="#f4f5f6"/>
<path d="M1907,262 l5.5,8 h-11 z" fill="#666"/>
<rect x="1902" y="295" width="11" height="561" rx="5.5" fill="#6e6e6e"/>
<path d="M1907,935 l-5.5,-8 h11 z" fill="#666"/>

<!-- tabs -->
<rect x="0" y="939" width="1895" height="35" fill="#e7eedb"/>
<rect x="1895" y="941" width="23" height="33" fill="#e7eedb"/>
<path d="M38,952 l-4,6 l4,6 M73,952 l4,6 l-4,6" fill="none" stroke="#444" stroke-width="1.2"/>
<circle cx="110" cy="958" r="1.5" fill="#444"/><circle cx="114.5" cy="958" r="1.5" fill="#444"/><circle cx="119" cy="958" r="1.5" fill="#444"/>
<path d="M142,974 V945 a6,6 0 0 1 6,-6 H248 a6,6 0 0 1 6,6 V974 Z" fill="url(#at)"/>
<text x="154" y="964" style="font-size:17.5px;fill:#222;stroke:#222;stroke-width:.25" textLength="93" lengthAdjust="spacingAndGlyphs">Desempeño</text>
<rect x="151" y="968.5" width="95" height="2.6" rx="1" fill="#2e7d5b"/>
<rect x="267.5" y="944" width="192.5" height="30" rx="5" fill="#002060"/><text class="tb" x="282" y="964" textLength="167" lengthAdjust="spacingAndGlyphs">Desempeño por Nivel</text>
<rect x="471" y="944" width="214" height="30" rx="5" fill="#002060"/><text class="tb" x="486" y="964" textLength="189" lengthAdjust="spacingAndGlyphs">Desempeño por Periodo</text>
<rect x="697" y="944" width="237" height="30" rx="5" fill="#002060"/><text class="tb" x="712" y="964" textLength="210" lengthAdjust="spacingAndGlyphs">Desempeño por Asignatura</text>
<rect x="946" y="944" width="200.5" height="30" rx="5" fill="#002060"/><text class="tb" x="959" y="964" textLength="177" lengthAdjust="spacingAndGlyphs">Desempeño por Grupo</text>
<rect x="1158" y="944" width="235" height="30" rx="5" fill="#002060"/><text class="tb" x="1172" y="964" textLength="209" lengthAdjust="spacingAndGlyphs">Desempeño por Estudiante</text>
<rect x="1404" y="944" width="105" height="30" rx="5" fill="#00b050"/><text x="1416" y="964" style="font-size:17.5px;fill:#0a2a15" textLength="81" lengthAdjust="spacingAndGlyphs">Promedios</text>
<g clip-path="url(#tc)"><rect x="1520" y="944" width="60" height="30" rx="5" fill="#00b050"/><text x="1533" y="964" style="font-size:17.5px;fill:#0a2a15">Promedios</text></g>
<path d="M262,950 V970 M465.5,950 V970 M691,950 V970 M940,950 V970 M1152,950 V970 M1398.5,950 V970 M1514.5,950 V970" stroke="#cfd6c6"/>
<circle cx="1554" cy="958" r="1.4" fill="#444"/><circle cx="1558.5" cy="958" r="1.4" fill="#444"/><circle cx="1563" cy="958" r="1.4" fill="#444"/>
<path d="M1598,950 V966 M1590,958 H1606" stroke="#444" stroke-width="1.3"/>
<circle cx="1638" cy="952" r="1.4" fill="#444"/><circle cx="1638" cy="958" r="1.4" fill="#444"/><circle cx="1638" cy="964" r="1.4" fill="#444"/>
<rect x="1660" y="948" width="235" height="21" rx="10.5" fill="#f3f5ee"/>
<path d="M1666,958.5 l5,-5 v10 z" fill="#666"/>
<rect x="1680" y="953" width="184" height="11" rx="5.5" fill="#777"/>
<path d="M1873,958.5 l-5,-5 v10 z" fill="#666"/>
</svg>
</body></html>
